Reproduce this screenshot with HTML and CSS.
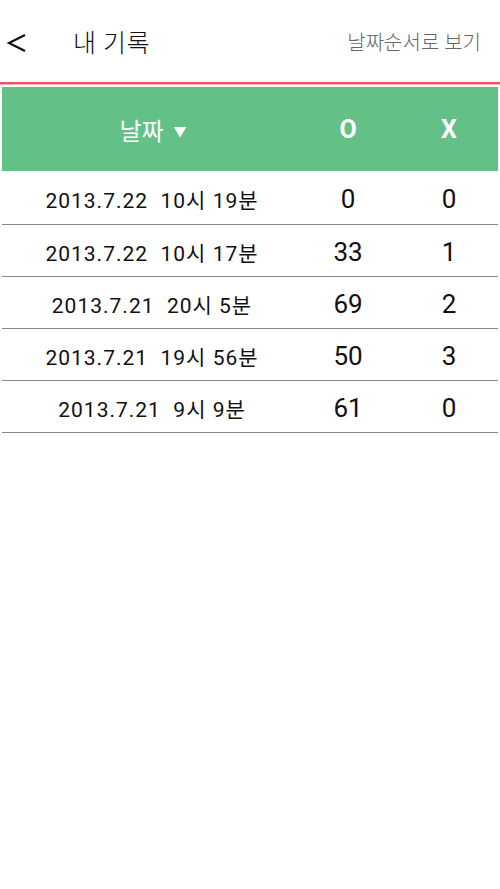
FILE: index.html
```html
<!DOCTYPE html>
<html>
<head>
	<meta charset="utf-8">
	<title>내 기록</title>
	<link rel="stylesheet" href="styles.css">
</head>
<body>
	<div class="topbar">
		<svg class="back" width="65" height="20" viewBox="0 0 65 20">
			<polyline points="25,2 9,10 25,18" fill="none" stroke="#111" stroke-width="2.2"/>
		</svg>
		<span class="title">내 기록</span>
		<span class="sort">날짜순서로 보기</span>
	</div>
	<div class="redline"></div>
	<div class="table">
		<div class="head">
			<div class="datehead">날짜 <span class="arrow">▼</span></div>
			<div class="mark">O</div>
			<div class="mark">X</div>
		</div>
		<div class="row first">
			<div class="date">2013.7.22&nbsp;&nbsp;10시 19분</div>
			<div class="num">0</div>
			<div class="num">0</div>
		</div>
		<div class="row">
			<div class="date">2013.7.22&nbsp;&nbsp;10시 17분</div>
			<div class="num">33</div>
			<div class="num">1</div>
		</div>
		<div class="row">
			<div class="date">2013.7.21&nbsp;&nbsp;20시 5분</div>
			<div class="num">69</div>
			<div class="num">2</div>
		</div>
		<div class="row">
			<div class="date">2013.7.21&nbsp;&nbsp;19시 56분</div>
			<div class="num">50</div>
			<div class="num">3</div>
		</div>
		<div class="row">
			<div class="date">2013.7.21&nbsp;&nbsp;9시 9분</div>
			<div class="num">61</div>
			<div class="num">0</div>
		</div>
	</div>
</body>
</html>
```

FILE: styles.css
```css
* {
	box-sizing: border-box;
	font-family: Roboto, "Noto Sans CJK KR", sans-serif;
}

body {
	margin: 0;
	background-color: #fff;
	color: #111;
}

.topbar {
	display: flex;
	align-items: center;
	height: 82px;
	padding: 0 19px 0 0;
}

.back {
	flex: none;
	margin-top: 4px;
}

.title {
	font-size: 25px;
	flex: 1;
	margin-left: 8px;
	font-weight: 300;
	letter-spacing: 0.5px;
}

.sort {
	font-size: 20px;
	color: #666;
	font-weight: 300;
}

.redline {
	height: 3px;
	background-color: #f0575c;
	border-bottom: 1px solid #f9b5b5;
}

.table {
	padding: 0 2px;
	margin-top: 2px;
}

.head, .row {
	display: grid;
	grid-template-columns: 300px 92px 1fr;
	align-items: center;
	text-align: center;
}

.head > div:last-child, .row > div:last-child {
	padding-left: 6px;
}

.head {
	height: 84px;
	background-color: #63c087;
	color: #fff;
}

.datehead {
	font-size: 24px;
	padding-left: 2px;
}

.arrow {
	font-size: 13px;
	vertical-align: 4px;
	margin-left: 4px;
}

.mark {
	font-size: 25px;
	font-weight: bold;
}

.row {
	height: 52px;
	border-bottom: 1px solid #888;
	padding-top: 2px;
}

.row.first {
	height: 54px;
}

.date {
	font-size: 21px;
	letter-spacing: 1px;
}

.num {
	font-size: 26px;
}
```
